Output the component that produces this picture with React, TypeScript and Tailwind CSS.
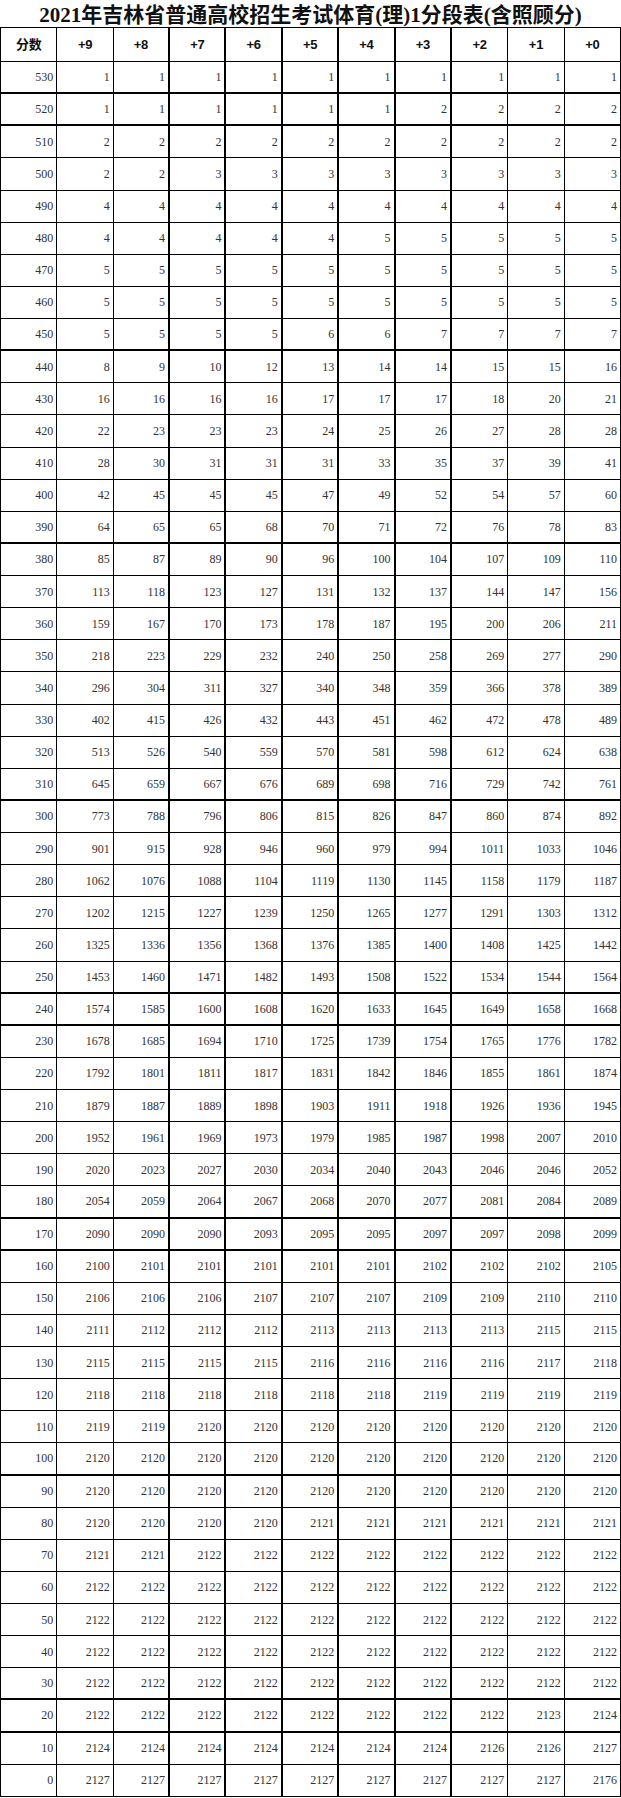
import React from "react"

const headers = ["分数", "+9", "+8", "+7", "+6", "+5", "+4", "+3", "+2", "+1", "+0"]

// 每行：分数, +9 ... +0
const raw = `530 1 1 1 1 1 1 1 1 1 1
520 1 1 1 1 1 1 2 2 2 2
510 2 2 2 2 2 2 2 2 2 2
500 2 2 3 3 3 3 3 3 3 3
490 4 4 4 4 4 4 4 4 4 4
480 4 4 4 4 4 5 5 5 5 5
470 5 5 5 5 5 5 5 5 5 5
460 5 5 5 5 5 5 5 5 5 5
450 5 5 5 5 6 6 7 7 7 7
440 8 9 10 12 13 14 14 15 15 16
430 16 16 16 16 17 17 17 18 20 21
420 22 23 23 23 24 25 26 27 28 28
410 28 30 31 31 31 33 35 37 39 41
400 42 45 45 45 47 49 52 54 57 60
390 64 65 65 68 70 71 72 76 78 83
380 85 87 89 90 96 100 104 107 109 110
370 113 118 123 127 131 132 137 144 147 156
360 159 167 170 173 178 187 195 200 206 211
350 218 223 229 232 240 250 258 269 277 290
340 296 304 311 327 340 348 359 366 378 389
330 402 415 426 432 443 451 462 472 478 489
320 513 526 540 559 570 581 598 612 624 638
310 645 659 667 676 689 698 716 729 742 761
300 773 788 796 806 815 826 847 860 874 892
290 901 915 928 946 960 979 994 1011 1033 1046
280 1062 1076 1088 1104 1119 1130 1145 1158 1179 1187
270 1202 1215 1227 1239 1250 1265 1277 1291 1303 1312
260 1325 1336 1356 1368 1376 1385 1400 1408 1425 1442
250 1453 1460 1471 1482 1493 1508 1522 1534 1544 1564
240 1574 1585 1600 1608 1620 1633 1645 1649 1658 1668
230 1678 1685 1694 1710 1725 1739 1754 1765 1776 1782
220 1792 1801 1811 1817 1831 1842 1846 1855 1861 1874
210 1879 1887 1889 1898 1903 1911 1918 1926 1936 1945
200 1952 1961 1969 1973 1979 1985 1987 1998 2007 2010
190 2020 2023 2027 2030 2034 2040 2043 2046 2046 2052
180 2054 2059 2064 2067 2068 2070 2077 2081 2084 2089
170 2090 2090 2090 2093 2095 2095 2097 2097 2098 2099
160 2100 2101 2101 2101 2101 2101 2102 2102 2102 2105
150 2106 2106 2106 2107 2107 2107 2109 2109 2110 2110
140 2111 2112 2112 2112 2113 2113 2113 2113 2115 2115
130 2115 2115 2115 2115 2116 2116 2116 2116 2117 2118
120 2118 2118 2118 2118 2118 2118 2119 2119 2119 2119
110 2119 2119 2120 2120 2120 2120 2120 2120 2120 2120
100 2120 2120 2120 2120 2120 2120 2120 2120 2120 2120
90 2120 2120 2120 2120 2120 2120 2120 2120 2120 2120
80 2120 2120 2120 2120 2121 2121 2121 2121 2121 2121
70 2121 2121 2122 2122 2122 2122 2122 2122 2122 2122
60 2122 2122 2122 2122 2122 2122 2122 2122 2122 2122
50 2122 2122 2122 2122 2122 2122 2122 2122 2122 2122
40 2122 2122 2122 2122 2122 2122 2122 2122 2122 2122
30 2122 2122 2122 2122 2122 2122 2122 2122 2122 2122
20 2122 2122 2122 2122 2122 2122 2122 2122 2123 2124
10 2124 2124 2124 2124 2124 2124 2124 2126 2126 2127
0 2127 2127 2127 2127 2127 2127 2127 2127 2127 2176`

const rows = raw.split("\n").map((line) => line.trim().split(/\s+/))

const thickRows = new Set(["530", "520", "450", "390", "310", "250", "240", "180", "170", "100", "30", "20"])

const rightBorder = (i: number) => (i >= 2 && i <= 7 ? "border-r-2" : "border-r")

export default function App() {
  return (
    <div className="w-[621px] bg-white text-black">
      <div
        className="h-[27px] flex items-end justify-center text-[21px] leading-[24px] font-bold text-[#111]"
        style={{ fontFamily: '"Liberation Serif", "Noto Sans CJK SC", serif' }}
      >
        2021年吉林省普通高校招生考试体育(理)1分段表(含照顾分)
      </div>

      <div className="border-l border-t border-black">
        {/* 表头 */}
        <div className="grid grid-cols-11 h-[34px] border-b border-black">
          {headers.map((h, i) => (
            <div
              key={h}
              className={`${rightBorder(i)} border-black flex items-center justify-center text-[13px] font-bold tracking-tight text-[#111]`}
              style={{ fontFamily: '"Liberation Sans", "Noto Sans CJK SC", sans-serif' }}
            >
              {h}
            </div>
          ))}
        </div>

        {rows.map((r) => (
          <div
            key={r[0]}
            className={`grid grid-cols-11 h-[32.13px] ${thickRows.has(r[0]) ? "border-b-2" : "border-b"} border-black`}
          >
            {r.map((v, i) => (
              <div
                key={i}
                className={`${rightBorder(i)} border-black flex items-center justify-end pr-[3px] text-[12px] text-[#333]`}
                style={{ fontFamily: '"Liberation Serif", serif' }}
              >
                {v}
              </div>
            ))}
          </div>
        ))}
      </div>
    </div>
  )
}
